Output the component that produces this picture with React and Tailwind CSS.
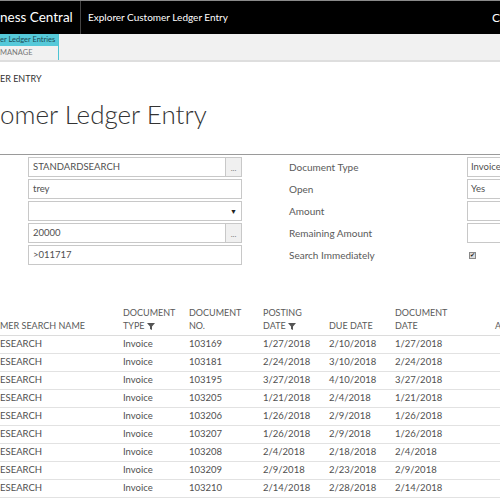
import React from "react";

const rows = [
  ["103169", "1/27/2018", "2/10/2018", "1/27/2018"],
  ["103181", "2/24/2018", "3/10/2018", "2/24/2018"],
  ["103195", "3/27/2018", "4/10/2018", "3/27/2018"],
  ["103205", "1/21/2018", "2/4/2018", "1/21/2018"],
  ["103206", "1/26/2018", "2/9/2018", "1/26/2018"],
  ["103207", "1/26/2018", "2/9/2018", "1/26/2018"],
  ["103208", "2/4/2018", "2/18/2018", "2/4/2018"],
  ["103209", "2/9/2018", "2/23/2018", "2/9/2018"],
  ["103210", "2/14/2018", "2/28/2018", "2/14/2018"],
];

const F = { fontFamily: 'Lato, "Open Sans", sans-serif' };

function Filter() {
  return (
    <svg width="8" height="7" viewBox="0 0 8 7" className="inline-block ml-[2px] mb-[1px]">
      <path d="M0 0H8L5 3.5V7L3 6V3.5Z" fill="#555" />
    </svg>
  );
}

function Input({ children, btn, caret }) {
  return (
    <div className="flex h-[20px] w-[214px]">
      <div className="flex-1 border border-[#c8c8c8] bg-white flex items-center px-[4px] text-[9.5px] text-[#505050]">
        <span className="flex-1">{children}</span>
        {caret && <span className="text-[7px] text-[#222]">▼</span>}
      </div>
      {btn && (
        <div className="w-[16px] border border-l-0 border-[#c8c8c8] bg-[#f0f0f0] flex items-end justify-center pb-[4px] text-[8px] text-[#777] leading-none">
          ...
        </div>
      )}
    </div>
  );
}

export default function App() {
  return (
    <div className="w-[500px] h-[500px] overflow-hidden bg-white relative" style={F}>
      {/* top bar */}
      <div className="h-[34px] bg-black border-t border-[#8a8a8a] flex items-stretch text-white">
        <div className="w-[81px] flex items-center text-[13.5px] leading-none whitespace-nowrap border-r border-[#444]">
          ness Central
        </div>
        <div className="flex-1 flex items-center pl-[7px] text-[10px] whitespace-nowrap">
          Explorer Customer Ledger Entry
        </div>
        <div className="w-[8px] flex items-center text-[12px] overflow-hidden">C</div>
      </div>
      {/* nav */}
      <div className="h-[28px] bg-[#f1f1f1] border-b-2 border-[#dedede] flex">
        <div className="w-[59px] border-r border-[#4cc4d4] flex flex-col">
          <div className="h-[12px] bg-[#56c9d9] text-[7.5px] text-[#1a4a55] leading-[12px] whitespace-nowrap">
            er Ledger Entries
          </div>
          <div className="flex-1 text-[7.5px] text-[#777] leading-[14px] whitespace-nowrap">MANAGE</div>
        </div>
      </div>
      {/* breadcrumb */}
      <div className="mt-[11px] text-[9px] text-[#333] leading-[12px] whitespace-nowrap">ER ENTRY</div>
      {/* title */}
      <div className="mt-[11px] text-[26px] font-light text-[#333] leading-[36px] whitespace-nowrap">
        omer Ledger Entry
      </div>
      <div className="mt-[22px] border-t border-[#9a9a9a]" />
      {/* fields */}
      <div className="flex mt-[2px]">
        <div className="ml-[28px] flex flex-col gap-[2px] w-[215px]">
          <Input btn>STANDARDSEARCH</Input>
          <Input>trey</Input>
          <Input caret>{""}</Input>
          <Input btn>20000</Input>
          <Input>&gt;011717</Input>
        </div>
        <div className="ml-[46px] flex flex-col gap-[2px] text-[10px] text-[#5a5a5a]">
          {["Document Type", "Open", "Amount", "Remaining Amount", "Search Immediately"].map((l) => (
            <div key={l} className="h-[20px] flex items-center whitespace-nowrap">{l}</div>
          ))}
        </div>
        <div className="ml-auto w-[33px] flex flex-col gap-[2px]">
          {["Invoice", "Yes", "", ""].map((v, i) => (
            <div key={i} className="h-[20px] border border-r-0 border-[#c8c8c8] flex items-center pl-[3px] text-[9.5px] text-[#505050] whitespace-nowrap overflow-hidden">
              {v}
            </div>
          ))}
          <div className="h-[20px] flex items-center pl-[2px]">
            <div className="w-[7px] h-[7px] border border-[#888] bg-[#ddd] flex items-center justify-center text-[6px] leading-none text-[#222]">✔</div>
          </div>
        </div>
      </div>
      {/* table */}
      <div className="mt-[39px] text-[9.5px]">
        <div className="grid grid-cols-[123px_66px_74px_66px_66px_100px_1fr] items-end h-[32px] pb-[3px] text-[9px] text-[#5a5a5a] leading-[13px] border-b border-[#dcdcdc] whitespace-nowrap">
          <div>MER SEARCH NAME</div>
          <div>DOCUMENT<br />TYPE<Filter /></div>
          <div>DOCUMENT<br />NO.</div>
          <div>POSTING<br />DATE<Filter /></div>
          <div>DUE DATE</div>
          <div>DOCUMENT<br />DATE</div>
          <div>A</div>
        </div>
        {rows.map((r) => (
          <div key={r[0]} className="grid grid-cols-[123px_66px_74px_66px_66px_100px_1fr] h-[18px] items-center border-b border-[#e2e2e2] text-[#505050] whitespace-nowrap">
            <div>ESEARCH</div>
            <div>Invoice</div>
            <div>{r[0]}</div>
            <div>{r[1]}</div>
            <div>{r[2]}</div>
            <div>{r[3]}</div>
            <div />
          </div>
        ))}
      </div>
    </div>
  );
}
